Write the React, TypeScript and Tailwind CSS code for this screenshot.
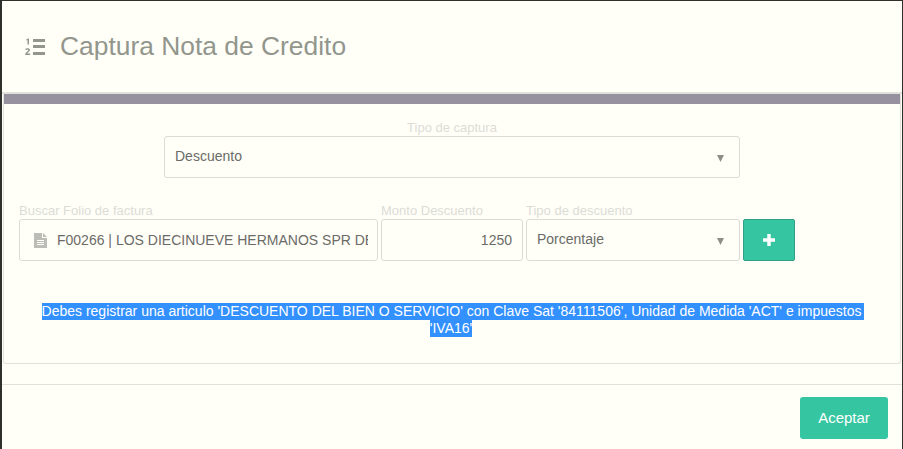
import React from "react";

const FONT = "font-['Liberation_Sans',Arial,sans-serif]";

function ListIcon() {
  return (
    <svg width="20" height="17" viewBox="0 0 20 17" className="text-[#92968c]" fill="currentColor">
      <rect x="8" y="1" width="12" height="3" />
      <rect x="8" y="7" width="12" height="3" />
      <rect x="8" y="14" width="12" height="3" />
      <path d="M1.5 1 L4 0.4 V6.5 H2.5 V2.2 L1.5 2.5 Z" />
      <path d="M0.3 11.4 C0.9 9.9 5 9.9 5 12 C5 13.6 2.9 14.2 2.4 15.4 H5.2 V17 H0.2 C0.2 14.2 3.3 13.4 3.3 12.2 C3.3 11.2 1.6 11.4 1 12.3 Z" />
    </svg>
  );
}

function FileIcon() {
  return (
    <svg width="13" height="15" viewBox="0 0 13 15" className="shrink-0">
      <path d="M0 0 H8 V5 H13 V15 H0 Z" fill="#bdbdb7" />
      <path d="M9 0 L13 4 H9 Z" fill="#bdbdb7" />
      <rect x="3" y="7" width="7" height="1" fill="#fffff8" />
      <rect x="3" y="9" width="7" height="1" fill="#fffff8" />
      <rect x="3" y="11" width="7" height="1" fill="#fffff8" />
    </svg>
  );
}

function Caret() {
  return (
    <svg width="7" height="7" viewBox="0 0 7 7" className="mt-[3px] shrink-0">
      <path d="M0 0 H7 L3.5 7 Z" fill="#8e8e88" />
    </svg>
  );
}

function SelectBox({ value, className }: { value: string; className: string }) {
  return (
    <div
      className={`flex h-[42px] items-center justify-between rounded-[3px] border border-[#dcdcd6] pr-[15px] pl-[10px] text-sm text-[#6b6b67] ${className}`}
    >
      <span className="-mt-[2px]">{value}</span>
      <Caret />
    </div>
  );
}

function Label({ children, className = "" }: { children: React.ReactNode; className?: string }) {
  return <div className={`h-[15px] text-[13px] leading-[15px] text-[#dcdcd6] ${className}`}>{children}</div>;
}

export default function App() {
  return (
    <div className={`h-[449px] w-[903px] overflow-hidden bg-[#2e302b] pt-px pl-[2px] ${FONT}`}>
      <div className="flex h-[448px] w-[900px] flex-col bg-[#fffff8]">
        {/* Header */}
        <div className="flex h-[93px] shrink-0 items-center gap-[15px] border-b-2 border-[#e2e2dc] pl-[23px]">
          <ListIcon />
          <h2 className="text-[26.4px] leading-none text-[#92968c]">Captura Nota de Credito</h2>
        </div>

        {/* Panel */}
        <div className="mx-px flex h-[270px] shrink-0 flex-col rounded-b-[3px] border-r border-b border-l border-[#e2e2dc]">
          <div className="h-[10px] shrink-0 bg-[#97919f]" />
          <Label className="mt-4 text-center">Tipo de captura</Label>
          <div className="flex justify-center">
            <SelectBox value="Descuento" className="mt-px w-[576px]" />
          </div>

          <div className="mt-[25px] flex gap-[3px] pl-[15px]">
            <div className="w-[359px]">
              <Label>Buscar Folio de factura</Label>
              <div className="mt-px flex h-[42px] items-center gap-[10px] rounded-[3px] border border-[#dcdcd6] pl-[14px] text-sm text-[#6b6b67]">
                <FileIcon />
                <span className="w-[311px] overflow-hidden whitespace-nowrap">
                  F00266 | LOS DIECINUEVE HERMANOS SPR DE RL
                </span>
              </div>
            </div>
            <div className="w-[142px]">
              <Label>Monto Descuento</Label>
              <div className="mt-px flex h-[42px] items-center justify-end rounded-[3px] border border-[#dcdcd6] pr-[10px] text-sm text-[#6b6b67]">
                1250
              </div>
            </div>
            <div className="w-[214px]">
              <Label>Tipo de descuento</Label>
              <SelectBox value="Porcentaje" className="mt-px" />
            </div>
            <button className="mt-4 flex h-[42px] w-[52px] items-center justify-center rounded-[2px] border border-[#2f9f85] bg-[#35c6a1]">
              <svg width="12" height="12" viewBox="0 0 12 12" fill="#fff">
                <rect x="4.3" y="0" width="3.4" height="12" rx="0.5" />
                <rect x="0" y="4.3" width="12" height="3.4" rx="0.5" />
              </svg>
            </button>
          </div>

          <div className="mt-[42px] text-center text-sm leading-[17px] text-white">
            <div className="pl-[2px]">
              <span className="mx-auto block w-fit bg-[#3390ff] pr-[3px]">
                Debes registrar una articulo 'DESCUENTO DEL BIEN O SERVICIO' con Clave Sat '84111506', Unidad de Medida 'ACT' e impuestos
              </span>
            </div>
            <div className="pr-[2px]">
              <span className="mx-auto block w-fit bg-[#3390ff]">'IVA16'</span>
            </div>
          </div>
        </div>

        {/* Footer */}
        <div className="mt-5 flex flex-1 justify-end border-t border-[#e2e2dc] pt-3 pr-[14px]">
          <button className="h-[42px] w-[88px] rounded-[3px] bg-[#35c6a1] text-[15px] text-white">Aceptar</button>
        </div>
      </div>
    </div>
  );
}
